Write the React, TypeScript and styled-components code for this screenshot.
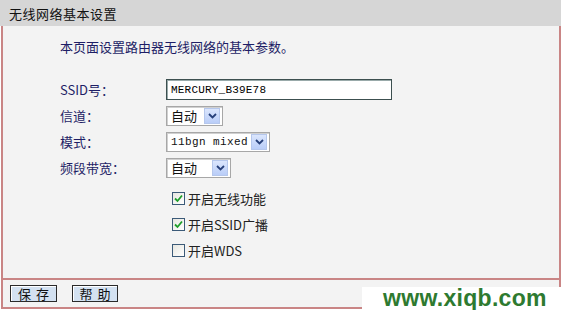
import React from "react";
import styled, { createGlobalStyle } from "styled-components";

const GlobalStyle = createGlobalStyle`
  html, body { margin: 0; padding: 0; background: #ffffff; }
  body { font-family: "Noto Sans CJK SC", "Liberation Sans", sans-serif; }
  * { box-sizing: border-box; }
`;

const Root = styled.div`
  position: relative;
  width: 564px;
  height: 310px;
  overflow: hidden;
`;

const Frame = styled.div`
  width: 561px;
`;

const TitleBar = styled.div`
  height: 26px;
  background: #d6d6d6;
  display: flex;
  align-items: center;
  padding-left: 9px;
  font-size: 13px;
  letter-spacing: 0.5px;
  color: #111;
`;

const Panel = styled.div`
  margin-left: 1px;
  width: 560px;
  background: #f3f3f3;
  border-left: 2px solid #c98585;
  border-right: 2px solid #c98585;
  border-bottom: 2px solid #c98585;
`;

const Body = styled.div`
  padding: 13px 0 17px 57px;
`;

const Desc = styled.div`
  height: 16px;
  line-height: 16px;
  font-size: 13px;
  color: #1e1e66;
`;

const FormGrid = styled.div`
  margin-top: 24px;
  display: grid;
  grid-template-columns: 106px auto;
  grid-auto-rows: 21px;
  row-gap: 5px;
  align-items: center;
`;

const Label = styled.div`
  font-size: 13px;
  color: #1e1e66;
  line-height: 21px;
`;

const TextInput = styled.div`
  width: 226px;
  height: 21px;
  background: #fff;
  border: 1px solid #3c4f4f;
  box-shadow: inset 1px 1px 0 #9aa;
  display: flex;
  align-items: center;
  padding-left: 4px;
  font-family: "Liberation Mono", monospace;
  font-size: 11px;
  letter-spacing: 0.2px;
  color: #000;
`;

const SelectBox = styled.div<{ $w: number }>`
  width: ${(p) => p.$w}px;
  height: 20px;
  background: #fff;
  border: 1px solid #a7a7a7;
  box-shadow: inset 1px 1px 0 #d0d0d0;
  display: flex;
  align-items: center;
  justify-content: space-between;
  padding: 0 2px 0 4px;
`;

const SelectText = styled.span<{ $mono?: boolean }>`
  font-family: ${(p) =>
    p.$mono ? `"Liberation Mono", monospace` : `"Noto Sans CJK SC", sans-serif`};
  font-size: ${(p) => (p.$mono ? "11px" : "13px")};
  letter-spacing: ${(p) => (p.$mono ? "0.4px" : "0")};
  color: #111;
`;

const ArrowBtn = styled.span`
  width: 16px;
  height: 16px;
  background: linear-gradient(#dbe6fd, #b9cdf8);
  border: 1px solid #b5c7ec;
  display: flex;
  align-items: center;
  justify-content: center;
`;

const Checks = styled.div`
  margin-top: 10px;
  padding-left: 112px;
  display: grid;
  grid-auto-rows: 21px;
  row-gap: 5px;
  align-items: center;
`;

const CheckRow = styled.div`
  display: flex;
  align-items: center;
  gap: 3px;
  font-size: 13px;
  color: #222;
`;

const Box = styled.span`
  width: 13px;
  height: 13px;
  border: 1px solid #3b5a78;
  background: linear-gradient(135deg, #e6e6e0, #ffffff);
  display: flex;
  align-items: center;
  justify-content: center;
`;

const Footer = styled.div`
  height: 29px;
  border-top: 2px solid #c98585;
  display: flex;
  align-items: center;
  gap: 15px;
  padding-left: 7px;
`;

const Button = styled.div<{ $w: number }>`
  width: ${(p) => p.$w}px;
  height: 17px;
  background: #d3e1f1;
  border: 1px solid #2a2a2a;
  box-shadow: inset 1px 1px 0 #ffffff;
  display: flex;
  align-items: center;
  justify-content: center;
  padding-left: 5px;
  font-size: 13px;
  letter-spacing: 5px;
  color: #111;
`;

const Watermark = styled.div`
  position: absolute;
  left: 362px;
  top: 287px;
  width: 202px;
  height: 23px;
  background: #ffffff;
  display: flex;
  align-items: center;
  padding-left: 21px;
  font-family: "Liberation Sans", Arial, sans-serif;
  font-weight: bold;
  font-size: 23px;
  letter-spacing: 0.3px;
  color: #2e7a30;
`;

const Chevron = () => (
  <svg width="9" height="6" viewBox="0 0 9 6">
    <path d="M1 1 L4.5 4.5 L8 1" fill="none" stroke="#27407a" strokeWidth="1.8" />
  </svg>
);

const Tick = () => (
  <svg width="9" height="9" viewBox="0 0 9 9">
    <path d="M1 4.5 L3.5 7 L8 1.5" fill="none" stroke="#1e9e2a" strokeWidth="1.8" />
  </svg>
);

const Select = ({ w, text, mono }: { w: number; text: string; mono?: boolean }) => (
  <SelectBox $w={w}>
    <SelectText $mono={mono}>{text}</SelectText>
    <ArrowBtn>
      <Chevron />
    </ArrowBtn>
  </SelectBox>
);

const Check = ({ checked, label }: { checked: boolean; label: string }) => (
  <CheckRow>
    <Box>{checked && <Tick />}</Box>
    <span>{label}</span>
  </CheckRow>
);

export default function App() {
  return (
    <Root>
      <GlobalStyle />
      <Frame>
        <TitleBar>无线网络基本设置</TitleBar>
        <Panel>
          <Body>
            <Desc>本页面设置路由器无线网络的基本参数。</Desc>
            <FormGrid>
              <Label>SSID号：</Label>
              <TextInput>MERCURY_B39E78</TextInput>
              <Label>信道：</Label>
              <Select w={57} text="自动" />
              <Label>模式：</Label>
              <Select w={104} text="11bgn mixed" mono />
              <Label>频段带宽：</Label>
              <Select w={65} text="自动" />
            </FormGrid>
            <Checks>
              <Check checked label="开启无线功能" />
              <Check checked label="开启SSID广播" />
              <Check checked={false} label="开启WDS" />
            </Checks>
          </Body>
          <Footer>
            <Button $w={47}>保存</Button>
            <Button $w={46}>帮助</Button>
          </Footer>
        </Panel>
      </Frame>
      <Watermark>www.xiqb.com</Watermark>
    </Root>
  );
}
